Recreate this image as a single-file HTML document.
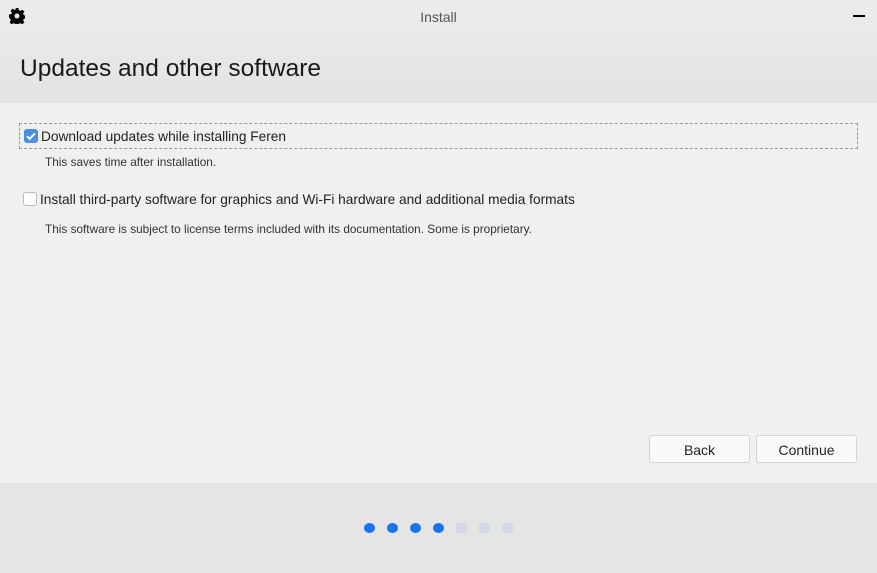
<!DOCTYPE html>
<html><head><style>
*{margin:0;padding:0;box-sizing:border-box}
body{width:877px;height:573px;overflow:hidden;font-family:"Liberation Sans",sans-serif;position:relative;background:#f1f0ee;color:#222}
.hdr{position:absolute;left:0;top:0;width:877px;height:103px;background:linear-gradient(#ececec,#e3e3e3)}
.title{position:absolute;top:9px;left:0;width:877px;text-align:center;font-size:14px;color:#555}
.h1{position:absolute;left:20px;top:55px;font-size:24.5px;color:#1a1a1a}
.min{position:absolute;left:853px;top:15px;width:12px;height:2px;background:#000}
.row{position:absolute;left:19px;width:839px;height:26px;font-size:13.7px}
.sel{border:1px dashed #999}
.cb{position:absolute;left:4px;top:5px;width:14px;height:14px;border-radius:3px}
.lbl{position:absolute;left:21px;top:5px;white-space:nowrap}
.sub{position:absolute;left:45px;font-size:11.8px;color:#333}
.btn{position:absolute;top:435px;width:101px;height:28px;border:1px solid #cdd3e0;border-radius:3px;background:#fafafa;font-size:14px;text-align:center;line-height:28px}
.foot{position:absolute;left:0;top:483px;width:877px;height:90px;background:#e5e5e5}
.dot{position:absolute;top:523px;width:11px;height:10px;border-radius:3px}
.b{border-radius:50%}
</style></head><body>
<div class="hdr"></div>
<svg style="position:absolute;left:9px;top:8px" width="16" height="16" viewBox="0 0 16 16"><path fill="#000" d="M6.5 0h3l.4 2.2 1.5.7 1.9-1.3 2.1 2.1-1.3 1.9.7 1.5 2.2.4v3l-2.2.4-.7 1.5 1.3 1.9-2.1 2.1-1.9-1.3-1.5.7-.4 2.2h-3l-.4-2.2-1.5-.7-1.9 1.3-2.1-2.1 1.3-1.9-.7-1.5L0 9.5v-3l2.2-.4.7-1.5-1.3-1.9 2.1-2.1 1.9 1.3 1.5-.7z"/><circle cx="8" cy="8" r="2.5" fill="#e8e8e8"/></svg>
<div class="title">Install</div>
<div class="min"></div>
<div class="h1">Updates and other software</div>
<div class="row sel" style="top:123px"><div class="cb" style="background:#4a8fe0"><svg width="14" height="14" viewBox="0 0 14 14"><path d="M3 7.2l2.7 2.6L11 4.3" stroke="#fff" stroke-width="2" fill="none"/></svg></div><div class="lbl">Download updates while installing Feren</div></div>
<div class="sub" style="top:155px">This saves time after installation.</div>
<div class="row" style="top:187px"><div class="cb" style="border:1px solid #bbb;background:#fff"></div><div class="lbl">Install third-party software for graphics and Wi-Fi hardware and additional media formats</div></div>
<div class="sub" style="top:222px">This software is subject to license terms included with its documentation. Some is proprietary.</div>
<div class="btn" style="left:649px">Back</div>
<div class="btn" style="left:756px">Continue</div>
<div class="foot"></div>
<div class="dot b" style="left:364px;background:#1a73f5"></div>
<div class="dot b" style="left:387px;background:#1a73f5"></div>
<div class="dot b" style="left:410px;background:#1a73f5"></div>
<div class="dot b" style="left:433px;background:#1a73f5"></div>
<div class="dot" style="left:456px;background:#d1d7e4"></div>
<div class="dot" style="left:479px;background:#d1d7e4"></div>
<div class="dot" style="left:502px;background:#d1d7e4"></div>
</body></html>
